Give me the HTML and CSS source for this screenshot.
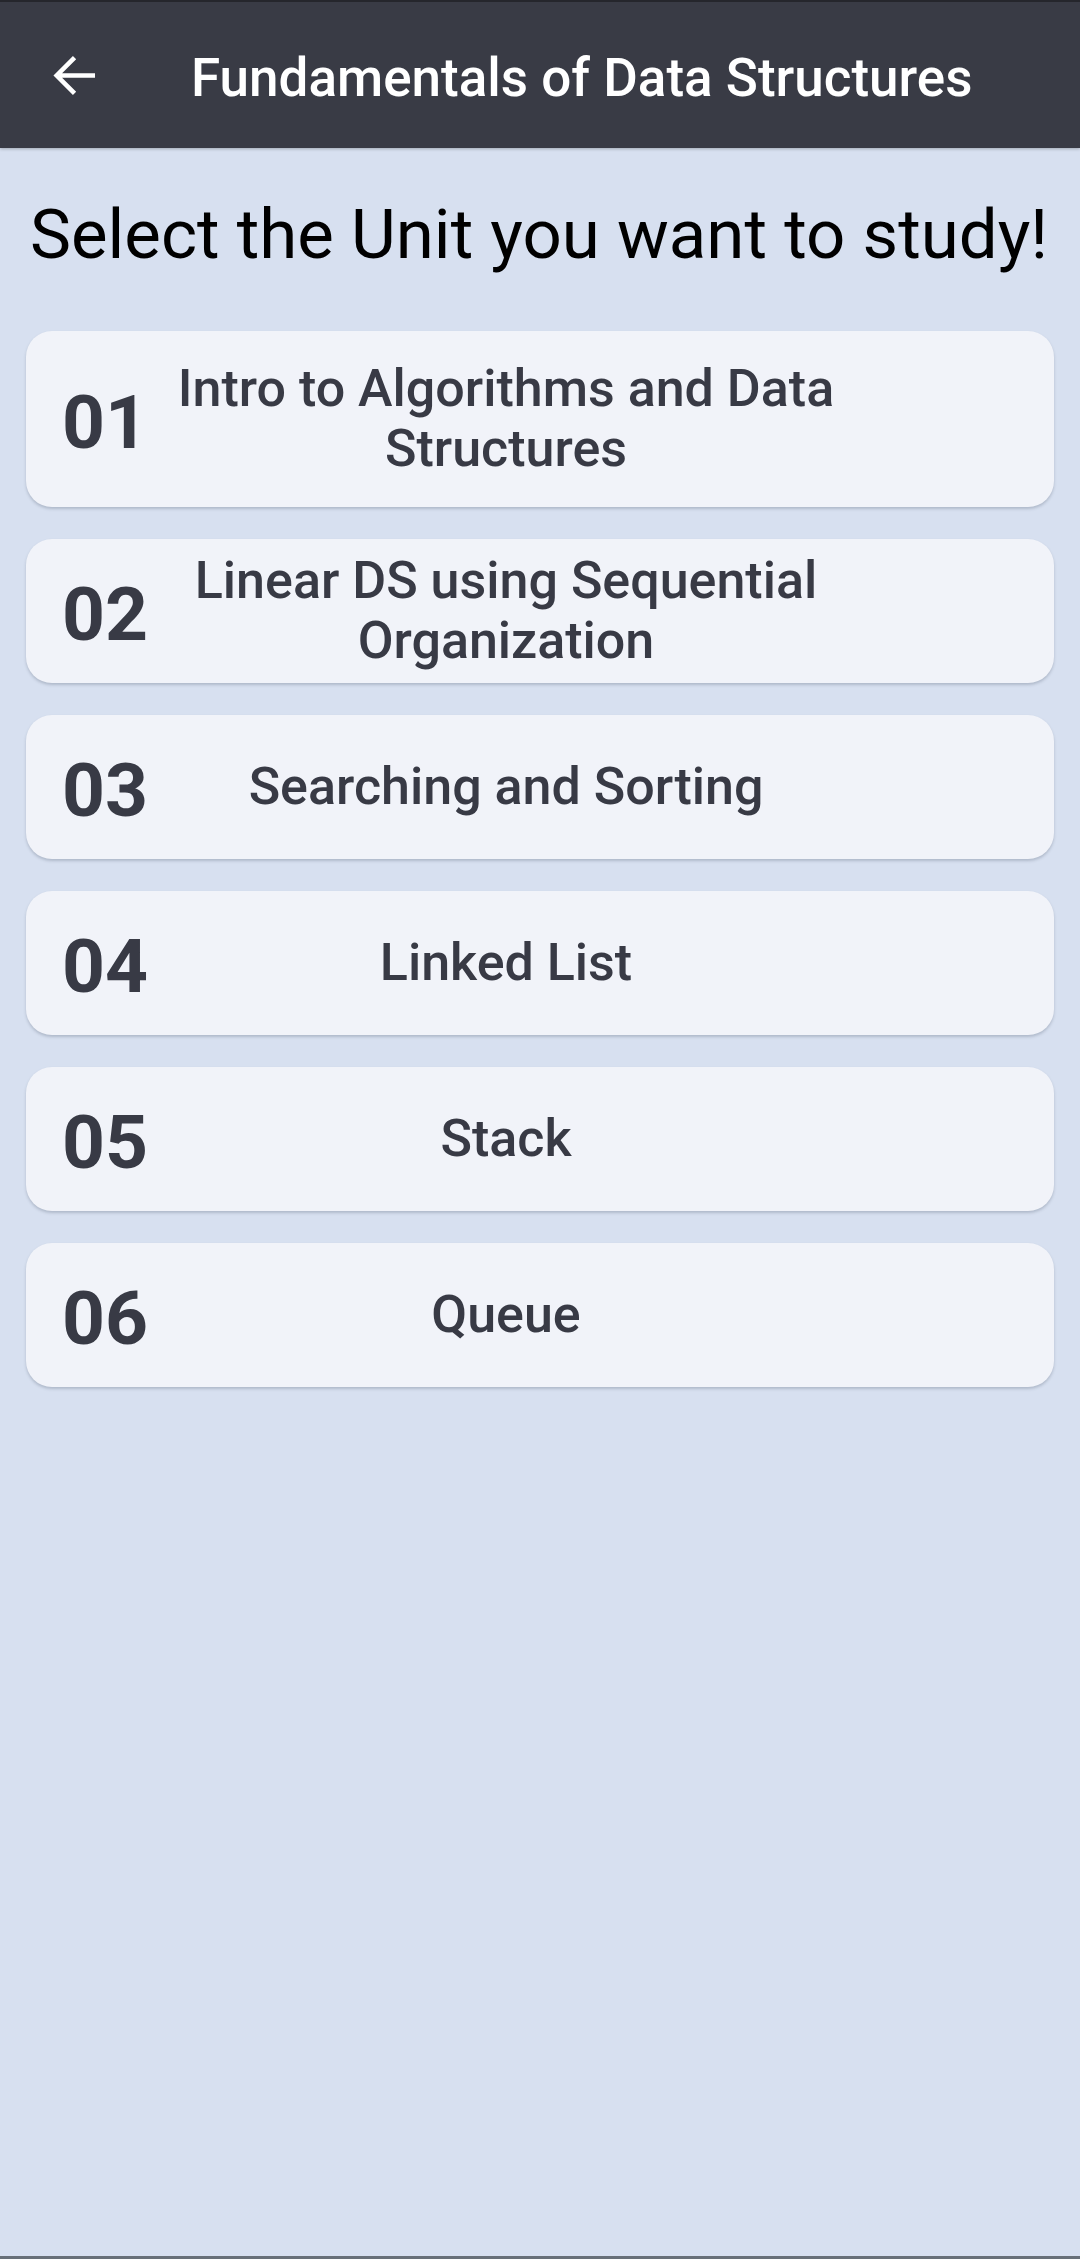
FILE: index.html
```html
<!DOCTYPE html>
<html lang="en">
<head>
<meta charset="utf-8">
<title>Fundamentals of Data Structures</title>
<link rel="stylesheet" href="styles.css">
</head>
<body>
<div class="screen">
  <header class="appbar">
    <svg class="back" viewBox="0 0 24 24" aria-hidden="true"><path d="M20.2 12H5.8M12.4 5.2L5.6 12l6.8 6.8" fill="none" stroke="#ffffff" stroke-width="1.75" stroke-linecap="butt" stroke-linejoin="miter"/></svg>
    <h1 class="appbar-title">Fundamentals of Data Structures</h1>
  </header>
  <main class="content">
    <h2 class="prompt">Select the Unit you want to study!</h2>
    <ul class="units">
      <li class="unit unit-tall"><span class="unit-num">01</span><span class="unit-name">Intro to Algorithms and Data Structures</span></li>
      <li class="unit"><span class="unit-num">02</span><span class="unit-name">Linear DS using Sequential Organization</span></li>
      <li class="unit"><span class="unit-num">03</span><span class="unit-name">Searching and Sorting</span></li>
      <li class="unit"><span class="unit-num">04</span><span class="unit-name">Linked List</span></li>
      <li class="unit"><span class="unit-num">05</span><span class="unit-name">Stack</span></li>
      <li class="unit"><span class="unit-num">06</span><span class="unit-name">Queue</span></li>
    </ul>
  </main>
</div>
</body>
</html>
```
FILE: styles.css
```css
* { box-sizing: border-box; }
html, body {
  margin: 0;
  padding: 0;
  background: #d7e0f0;
}
body {
  font-family: Roboto, "Liberation Sans", sans-serif;
}
.screen {
  width: 1080px;
  height: 2259px;
  display: flex;
  flex-direction: column;
  background: #d7e0f0;
  border-bottom: 3px solid #687079;
  overflow: hidden;
}
.appbar {
  height: 148px;
  flex: 0 0 148px;
  background: #393b45;
  border-top: 2px solid #25262c;
  display: flex;
  align-items: center;
  padding-left: 42px;
  box-shadow: 0 1px 3px rgba(0,0,0,0.25);
}
.back {
  width: 63px;
  height: 63px;
  flex: 0 0 63px;
}
.appbar-title {
  margin: 6px 0 0 86px;
  color: #ffffff;
  font-size: 53px;
  font-weight: 500;
  line-height: 60px;
}
.content {
  padding: 0 26px;
}
.prompt {
  margin: 47px 0 0 4px;
  font-size: 69px;
  font-weight: 400;
  line-height: 80px;
  color: #000000;
}
.units {
  list-style: none;
  margin: 56px 0 0 0;
  padding: 0;
  display: flex;
  flex-direction: column;
  gap: 32px;
}
.unit {
  height: 144px;
  background: #f1f3f9;
  border-radius: 26px;
  box-shadow: 0 2px 3px rgba(60, 70, 90, 0.25);
  display: flex;
  align-items: center;
  padding: 0 202px 0 36px;
  color: #383a45;
}
.unit-tall {
  height: 176px;
}
.unit-num {
  flex: 0 0 98px;
  font-size: 75px;
  font-weight: 700;
  line-height: 80px;
  margin-top: 5px;
}
.unit-name {
  flex: 1 1 auto;
  text-align: center;
  font-size: 52px;
  font-weight: 500;
  line-height: 60px;
}
```
